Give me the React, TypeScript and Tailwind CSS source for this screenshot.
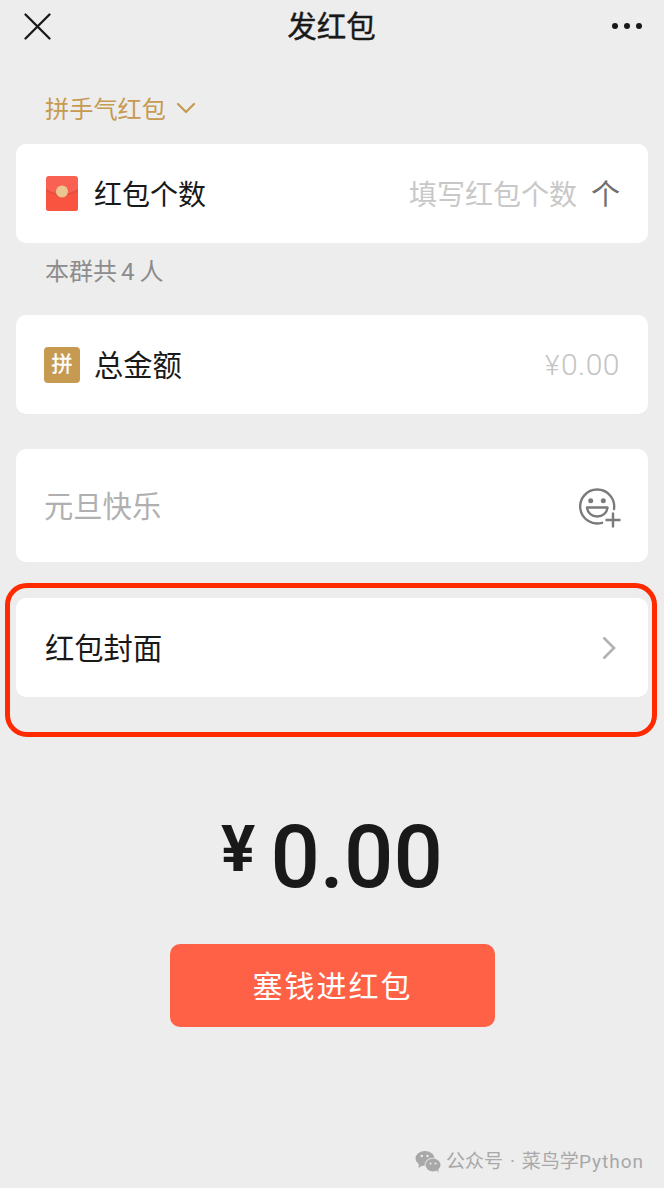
import React from 'react';

const CJK = "font-['Roboto','Noto_Sans_CJK_SC',sans-serif]";

const RedPacketIcon = () => (
  <svg width="32" height="35" viewBox="0 0 32 35" className="shrink-0">
    <rect x="0" y="0" width="32" height="35" rx="3" fill="#f96253" />
    <path d="M0 13 Q16 23 32 13 V32 a3 3 0 0 1 -3 3 H3 a3 3 0 0 1 -3 -3 Z" fill="#f95440" />
    <path d="M0 13 Q16 23 32 13 V15 Q16 25 0 15 Z" fill="#e54f3e" />
    <circle cx="16" cy="15.5" r="6" fill="#e9c78f" />
  </svg>
);

const SmileAddIcon = () => (
  <svg width="43" height="42" viewBox="0 0 43 42" fill="none" stroke="#7a7a7a" strokeWidth="2.4" className="mt-[5px]">
    <path d="M23 35.8 A17 17 0 1 1 35 22" strokeLinecap="round" />
    <circle cx="11.7" cy="13.7" r="2.5" fill="#7a7a7a" stroke="none" />
    <circle cx="24.3" cy="13.7" r="2.5" fill="#7a7a7a" stroke="none" />
    <path d="M8 20.5 H28.5 C28 26 23.5 29.5 18.2 29.5 C13 29.5 8.5 26 8 20.5 Z" strokeLinejoin="round" />
    <path d="M34 25.5 V40.5 M26.5 33 H41.5" />
  </svg>
);

const WeChatIcon = () => (
  <svg width="26" height="22" viewBox="0 0 26 22" className="shrink-0">
    <ellipse cx="10" cy="7.5" rx="9.5" ry="7.5" fill="#a8a8a8" />
    <path d="M4 12 L3.5 17 L9 13.5 Z" fill="#a8a8a8" />
    <ellipse cx="18" cy="14" rx="8.5" ry="7.2" fill="#ededed" />
    <ellipse cx="18" cy="14" rx="7.5" ry="6.4" fill="#a8a8a8" />
    <path d="M21 18.5 L23.5 22 L23 17 Z" fill="#a8a8a8" />
    <circle cx="6.8" cy="5" r="1.2" fill="#ededed" />
    <circle cx="12.5" cy="5" r="1.2" fill="#ededed" />
    <circle cx="15.5" cy="12.5" r="1" fill="#ededed" />
    <circle cx="20.5" cy="12.5" r="1" fill="#ededed" />
  </svg>
);

const Card = ({ className, children }: { className: string; children: React.ReactNode }) => (
  <div className={`flex items-center justify-between bg-white rounded-[10px] ${className}`}>{children}</div>
);

export default function App() {
  return (
    <div className={`relative w-[664px] h-[1188px] overflow-hidden bg-[#ededed] text-[#191919] ${CJK}`}>
      {/* nav */}
      <div className="flex items-center justify-between h-[52px] pl-[24px] pr-[22px]">
        <svg width="27" height="27" viewBox="0 0 27 27" stroke="#191919" strokeWidth="2.3" strokeLinecap="round">
          <path d="M1.5 1.5 L25.5 25.5 M25.5 1.5 L1.5 25.5" />
        </svg>
        <div className="text-[29.5px] pt-[2px] leading-[50px] [-webkit-text-stroke:0.4px_#191919]">发红包</div>
        <div className="flex gap-[6px]">
          <span className="w-[6px] h-[6px] rounded-full bg-[#191919]" />
          <span className="w-[6px] h-[6px] rounded-full bg-[#191919]" />
          <span className="w-[6px] h-[6px] rounded-full bg-[#191919]" />
        </div>
      </div>

      <div className="flex items-center gap-[10px] h-[40px] mt-[36px] pl-[45px] text-[24.2px] text-[#c69a50]">
        <span className="pt-[4px]">拼手气红包</span>
        <svg width="20" height="12" viewBox="0 0 20 12" fill="none" stroke="#c69a50" strokeWidth="2.2" strokeLinecap="round" strokeLinejoin="round">
          <path d="M2 2 L10 10 L18 2" />
        </svg>
      </div>

      <div className="mx-[16px] mt-[16px]">
        <Card className="h-[99px] pl-[30px] pr-[28px]">
          <div className="flex items-center gap-[16px] text-[28px]">
            <RedPacketIcon />
            <span className="pt-[4px]">红包个数</span>
          </div>
          <div className="flex items-center gap-[14px] text-[28px]">
            <span className="pt-[4px] text-[#c8c8c8]">填写红包个数</span>
            <span className="pt-[4px] text-[#6f6f6f] text-[29px]">个</span>
          </div>
        </Card>

        <div className="h-[72px] pl-[29px] pt-[10px] text-[24px] leading-[38px] text-[#8c8c8c]">
          本群共<span className="ml-[4px] mr-[5px]">4</span>人
        </div>

        <Card className="h-[99px] pl-[28px] pr-[28px]">
          <div className="flex items-center gap-[14px] text-[29.3px]">
            <div className="flex items-center justify-center w-[36px] h-[36px] rounded-[4px] bg-[#c69a50] text-white text-[21px] [-webkit-text-stroke:0.4px_white]">拼</div>
            <span className="pt-[4px]">总金额</span>
          </div>
          <div className="flex items-baseline text-[30px] font-light text-[#c4c4c4] tracking-[0.5px]">
            <span className="text-[28px] mr-[1px]">¥</span>0.00
          </div>
        </Card>

        <Card className="h-[113px] mt-[35px] pl-[28px] pr-[26px]">
          <div className="pt-[4px] text-[29.3px] text-[#b0b0b0]">元旦快乐</div>
          <SmileAddIcon />
        </Card>

        {/* highlighted row */}
        <div className="relative mt-[36px]">
          <Card className="h-[99px] pl-[29px] pr-[32px]">
            <div className="pt-[4px] text-[29.3px]">红包封面</div>
            <svg width="14" height="24" viewBox="0 0 14 24" fill="none" stroke="#b2b2b2" strokeWidth="2.6">
              <path d="M1.5 1.5 L12 12 L1.5 22.5" />
            </svg>
          </Card>
          <div className="absolute left-[-11px] top-[-15px] w-[652px] h-[154px] rounded-[22px] border-[5px] border-[#ff2a00]" />
        </div>
      </div>

      <div className="flex items-start justify-center h-[88px] mt-[117px] leading-none">
        <span className="text-[64px] font-bold mt-[4px] mr-[15px]">¥</span>
        <span className="text-[87px] font-medium">0.00</span>
      </div>

      <div className="flex items-center justify-center w-[325px] h-[83px] ml-[170px] mt-[42px] pt-[2px] rounded-[10px] bg-[#ff6146] text-white text-[30px] tracking-[2px]">
        塞钱进红包
      </div>

      <div className="absolute right-[20px] bottom-[12px] flex items-center text-[19px] text-[#a8a8a8]">
        <WeChatIcon />
        <span className="ml-[5px]">公众号</span>
        <span className="mx-[7px]">·</span>
        <span>菜鸟学</span>
        <span className="tracking-[1px]">Python</span>
      </div>
    </div>
  );
}
